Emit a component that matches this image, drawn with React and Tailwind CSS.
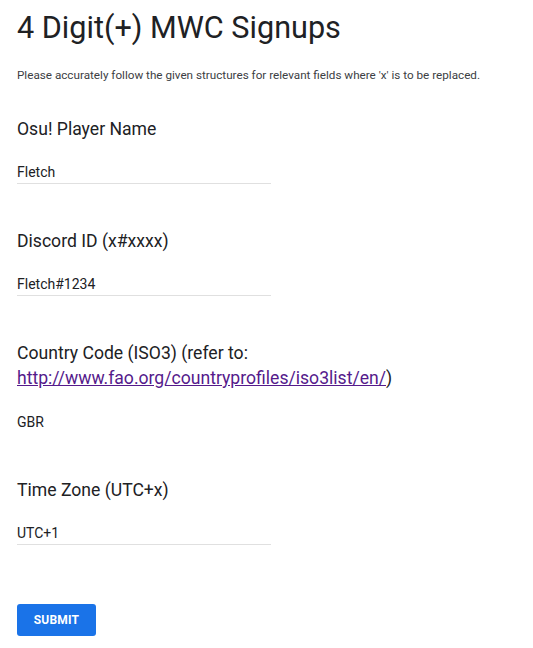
import React, { useState } from "react";

const fields = [
    { id: "name", label: "Osu! Player Name", value: "Fletch" },
    { id: "discord", label: "Discord ID (x#xxxx)", value: "Fletch#1234" },
    { id: "country", label: null, value: "GBR", noLine: true },
    { id: "tz", label: "Time Zone (UTC+x)", value: "UTC+1" },
];

function Field({ field, onChange }) {
    return (
        <div className={field.noLine ? "mb-[44px]" : "mb-[45px]"}>
            {field.label ? (
                <div className="text-[17.6px] leading-[24px] text-[#202124]">{field.label}</div>
            ) : (
                <div className="text-[17.6px] leading-[25px] text-[#202124]">
                    Country Code (ISO3) (refer to:
                    <br />
                    <a className="text-[#551a8b] underline" href="#">http://www.fao.org/countryprofiles/iso3list/en/</a>)
                </div>
            )}
            <input
                type="text"
                value={field.value}
                onChange={e => onChange(field.id, e.target.value)}
                className={"mt-[19px] block w-[254px] h-[24px] text-[14px] text-[#202124] outline-none bg-transparent " + (field.noLine ? "" : "border-b border-[#e0e0e0]")}
            />
        </div>
    );
}

export default function App() {
    const [data, setData] = useState(fields);

    const handleChange = (id, value) => {
        setData(data.map(f => (f.id === id ? { ...f, value } : f)));
    };

    return (
        <div className="bg-white min-h-screen px-[17px] pt-[8px] font-['Roboto',sans-serif]">
            <h1 className="text-[30.6px] leading-[40px] text-[#202124]">4 Digit(+) MWC Signups</h1>
            <p className="mt-[19px] text-[11.7px] leading-[16px] text-[#3c4043]">
                Please accurately follow the given structures for relevant fields where 'x' is to be replaced.
            </p>
            <form className="mt-[34px]" onSubmit={e => e.preventDefault()}>
                {data.map(f => (
                    <Field key={f.id} field={f} onChange={handleChange} />
                ))}
                <button
                    type="submit"
                    className="mt-[14px] w-[79px] h-[32px] rounded-[3px] bg-[#1a73e8] text-white text-[12px] font-bold tracking-[0.2px]"
                >
                    SUBMIT
                </button>
            </form>
        </div>
    );
}
